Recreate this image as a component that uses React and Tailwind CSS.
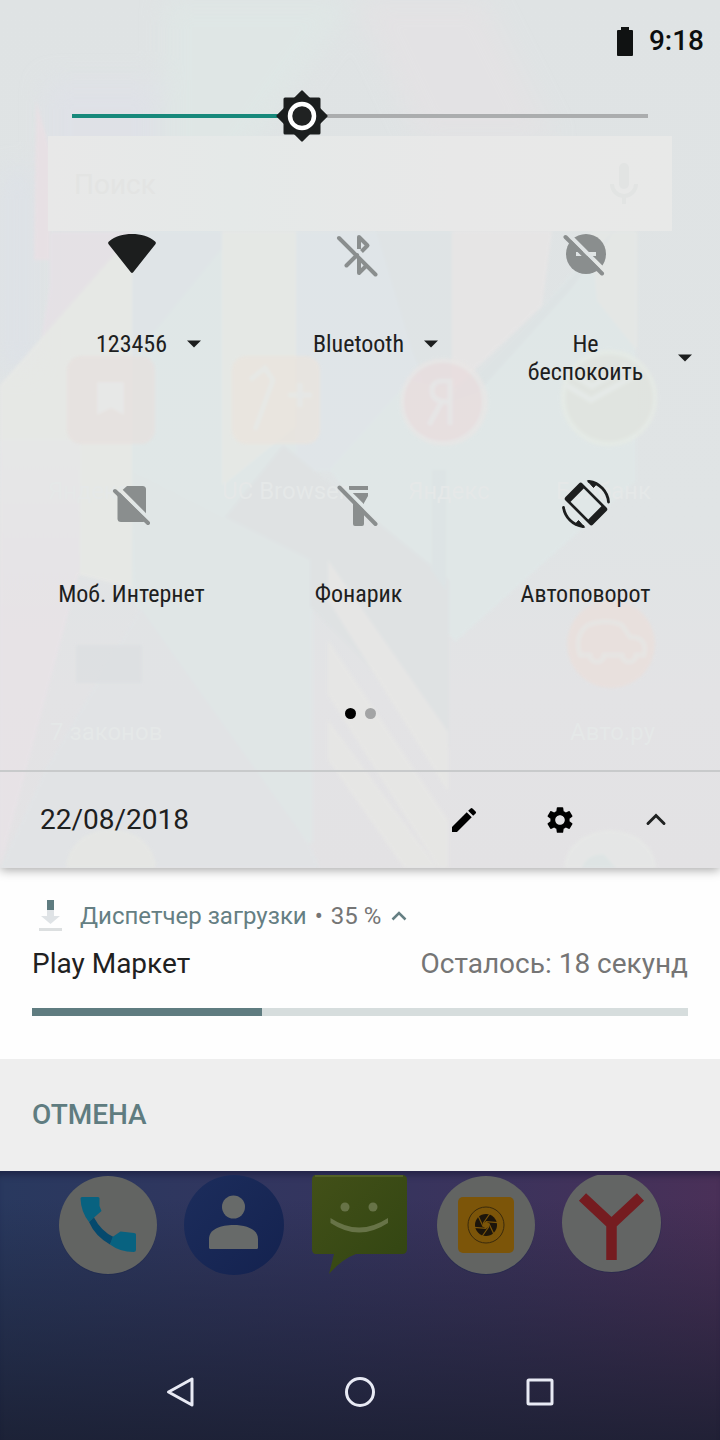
import React, { useState } from "react";
import { MdEdit, MdSettings } from "react-icons/md";

const OFF = "#8a8e8e";
const ON = "#1c1e1e";

function WifiIcon() {
  return (
    <svg viewBox="0 0 56 56" className="size-14" aria-hidden="true">
      <path
        fill={ON}
        d="M4.6 18.2Q3.4 16.6 5.2 15.2C11 10.5 19 8 28 8s17 2.500 22.800 7.200Q52.600 16.600 51.400 18.200L29.200 46.200Q28 47.600 26.800 46.200Z"
      />
    </svg>
  );
}

function BluetoothOffIcon() {
  return (
    <svg viewBox="0 0 56 56" className="size-14" aria-hidden="true">
      <g fill="none" stroke={OFF} strokeWidth="4" strokeLinejoin="round">
        <path d="M28 23V11l8.500 8.500-6 6" />
        <path d="M15.500 39.500l10.500-10.500" strokeLinecap="round" />
        <path d="M28 31v16l7.500-7.500" />
        <path d="M8 12l36.500 36.500" strokeLinecap="round" />
      </g>
    </svg>
  );
}

function DndOffIcon() {
  return (
    <svg viewBox="0 0 56 56" className="size-14" aria-hidden="true">
      <mask id="dnd-cut">
        <rect width="56" height="56" fill="#fff" />
        <path d="M18 28h20" stroke="#000" strokeWidth="4" />
        <path d="M10 8l40 40" stroke="#000" strokeWidth="4" />
      </mask>
      <circle cx="28" cy="28" r="20" fill={OFF} mask="url(#dnd-cut)" />
      <path d="M7.500 11l36.500 36.500" stroke={OFF} strokeWidth="4" strokeLinecap="round" />
    </svg>
  );
}

function SimOffIcon() {
  return (
    <svg viewBox="0 0 56 56" className="size-14" aria-hidden="true">
      <mask id="sim-cut">
        <rect width="56" height="56" fill="#fff" />
        <path d="M12 10l38 38" stroke="#000" strokeWidth="4" />
      </mask>
      <path
        fill={OFF}
        mask="url(#sim-cut)"
        d="M23 10H38.500Q42 10 42 13.500V42.500Q42 46 38.500 46H17Q13.500 46 13.500 42.500V18.500Z"
      />
      <path d="M11 15l33 32" stroke={OFF} strokeWidth="4" strokeLinecap="round" />
    </svg>
  );
}

function FlashlightOffIcon() {
  return (
    <svg viewBox="0 0 56 56" className="size-14" aria-hidden="true">
      <mask id="flash-cut">
        <rect width="56" height="56" fill="#fff" />
        <path d="M11 9l40 40" stroke="#000" strokeWidth="4" />
      </mask>
      <g fill={OFF} mask="url(#flash-cut)">
        <rect x="18" y="10" width="19" height="4" />
        <path d="M18 17h19v3l-4 7v21q0 2-2 2h-7q-2 0-2-2V27l-4-7z" />
      </g>
      <path d="M8.500 11.500l36 36.500" stroke={OFF} strokeWidth="4" strokeLinecap="round" />
    </svg>
  );
}

function RotateIcon() {
  return (
    <svg viewBox="0 0 56 56" className="size-14" aria-hidden="true">
      <path
        fill={ON}
        fillRule="evenodd"
        transform="rotate(-45 28 28)"
        d="M18.500 8.500h19q2.500 0 2.500 2.500v34q0 2.500-2.500 2.500h-19q-2.500 0-2.500-2.500v-34q0-2.500 2.500-2.500zM18.700 15.500v25h18.600v-25z"
      />
      <g fill="none" stroke={ON} strokeWidth="2.800" strokeLinecap="round">
        <path d="M31 5.500A22.500 22.500 0 0 1 50.500 26" />
        <path d="M25 50.500A22.500 22.500 0 0 1 5.500 31.500" />
      </g>
      <path
        fill={ON}
        stroke={ON}
        strokeLinejoin="round"
        d="M29.500 4.700l9.500 2.800-3.500 4z M26.500 51.300l-9.500-2.800 3.500-4z"
      />
    </svg>
  );
}

const tiles = [
  { label: "123456", Icon: WifiIcon, menu: true },
  { label: "Bluetooth", Icon: BluetoothOffIcon, menu: true },
  { label: "Не беспокоить", Icon: DndOffIcon, menu: true },
  { label: "Моб. Интернет", Icon: SimOffIcon },
  { label: "Фонарик", Icon: FlashlightOffIcon },
  { label: "Автоповорот", Icon: RotateIcon },
];

function Tile({ label, Icon, menu }) {
  return (
    <button className="flex h-[250px] flex-col items-center">
      <Icon />
      <span className="mt-12 grid w-full grid-cols-[1fr_auto_1fr] items-center">
        <span
          className={`col-start-2 text-center font-['Roboto_Condensed','Liberation_Sans_Narrow',Roboto,sans-serif] text-2xl leading-7 text-[#1d2020] ${
            menu ? "max-w-36" : ""
          }`}
        >
          {label}
        </span>
        {menu && (
          <svg viewBox="0 0 14 8" className="ml-5 h-2 w-3.5" aria-hidden="true">
            <path d="M0 0.500h14L7 7.500z" fill={ON} />
          </svg>
        )}
      </span>
    </button>
  );
}

// home screen showing through the translucent panel
function Backdrop() {
  return (
    <svg
      viewBox="0 0 720 868"
      preserveAspectRatio="none"
      className="absolute inset-0 h-full w-full"
      aria-hidden="true"
    >
      <defs>
        <linearGradient id="base" x1="0" y1="0" x2="0" y2="1">
          <stop offset="0" stopColor="#dfe3e4" />
          <stop offset="0.600" stopColor="#e0e4e5" />
          <stop offset="0.800" stopColor="#e3e3e5" />
          <stop offset="1" stopColor="#e3e2e4" />
        </linearGradient>
        <linearGradient id="left" x1="0" y1="0" x2="0" y2="1">
          <stop offset="0" stopColor="#e8e8e8" />
          <stop offset="0.400" stopColor="#e8e3e7" />
          <stop offset="1" stopColor="#e8e3e7" />
        </linearGradient>
        <linearGradient id="search" x1="0" y1="0" x2="1" y2="0">
          <stop offset="0" stopColor="#e8e8e8" />
          <stop offset="0.300" stopColor="#e5e9e8" />
          <stop offset="0.650" stopColor="#e8e8e8" />
          <stop offset="1" stopColor="#e8e9e8" />
        </linearGradient>
        <filter id="soft" x="-30%" y="-30%" width="160%" height="160%">
          <feGaussianBlur stdDeviation="12" />
        </filter>
        <filter id="haze" x="-10%" y="-10%" width="120%" height="120%">
          <feGaussianBlur stdDeviation="1.500" />
        </filter>
      </defs>
      <rect width="720" height="868" fill="url(#base)" />
      <g filter="url(#soft)" opacity="0.700">
        <path d="M45 80h115v90H45z" fill="#dfe1e8" />
        <path d="M165 0h190L230 180h-65z" fill="#dfe8e6" />
        <path d="M355 0h130l70 140H420z" fill="#e5e2e4" />
        <path d="M0 170h34v200H0z" fill="#dde1e8" />
      </g>
      <path d="M36 100l14 50v110H34z" fill="#ebe0e4" opacity="0.700" filter="url(#haze)" />
      <g filter="url(#haze)" opacity="0.850">
        <path d="M50 232h90L40 345l10-60z" fill="#e6e1e6" />
        <path d="M0 385v170l160 40V231h-25z" fill="#e8e9e6" />
        <path d="M132 231h90v30l-90 140z" fill="#dfe5e8" />
        <path d="M225 245L132 360v240l180 245V245z" fill="#e0e8e8" />
        <path d="M222 231h74v195l-74 60z" fill="#e7e9e6" />
        <path d="M296 231h80l60 110v130H296z" fill="#e0e6e9" />
        <path d="M376 231h76v220l-40-100z" fill="#dfe4e6" />
        <path d="M452 231h100l-10 75-90 85z" fill="#e8e6e6" />
        <path d="M575 270l60-38v250l-180 160L330 470l80-90 60 10z" fill="#e0e8e8" />
        <path d="M590 231h47v120l-40-50z" fill="#e5e8e6" />
        <path d="M545 305l70-75-45 60-90 100-30 10z" fill="#dde3e4" />
        <path d="M283 445l-58 72 104 110 120 120V580z" fill="#dfe2e3" />
        <path d="M0 440l80 0v130L0 868z" fill="url(#left)" />
        <path d="M145 600L45 770 0 868h320L310 845z" fill="#e1e4e6" />
        <path d="M132 470l178 90v285L135 600z" fill="#e0e7e7" />
        <path d="M432 470h14v120l-14-20z" fill="#dde4e5" />
        <g fill="#e7e7e5">
          <path d="M328 560l120 172v60L328 600z" />
          <path d="M328 640l120 180v48h-10L328 695z" />
          <path d="M328 720l110 148h-34L328 760z" />
        </g>
      </g>
      <rect x="48" y="136" width="624" height="95" fill="url(#search)" />
      <g fontFamily="Roboto, sans-serif">
        <text x="74" y="194" fontSize="28" fill="#e3e4e3">
          Поиск
        </text>
        <g fontSize="24" fill="#e5e8e8">
          <text x="48" y="499">Яндекс</text>
          <text x="222" y="499">UC Browser</text>
          <text x="408" y="499">Яндекс</text>
          <text x="556" y="499">Белбанк</text>
          <text x="50" y="740">7 законов</text>
          <text x="570" y="740">Авто.ру</text>
        </g>
      </g>
      <g fill="none" stroke="#e2e4e3" strokeWidth="4">
        <path d="M612 184a12 12 0 0 0 24 0M624 196v8" />
        <path d="M624 168v16" strokeWidth="10" strokeLinecap="round" />
      </g>
      <g opacity="0.700" filter="url(#haze)">
        <rect x="67" y="356" width="88" height="88" rx="14" fill="#e7e0de" />
        <path d="M97 382h27v33l-13-7-14 7z" fill="#e8e8e8" />
        <rect x="232" y="356" width="88" height="88" rx="14" fill="#ebe4dd" />
        <path
          d="M250 380l15-12 8 12-18 50M288 395h24M300 383v24"
          stroke="#e8e9e6"
          strokeWidth="5"
          fill="none"
        />
        <circle cx="444" cy="402" r="44" fill="#e9e6e5" />
        <circle cx="443" cy="402" r="39" fill="#eadcdd" />
        <path
          d="M450 425v-44h-9q-10 1-9 11t18 10M441 403l-12 22"
          stroke="#e9e6e6"
          strokeWidth="5"
          fill="none"
        />
        <circle cx="609" cy="398" r="46" fill="#e1e4de" stroke="#e6ebe5" strokeWidth="5" />
        <path
          d="M566 385l25 15 50-28M568 372l24 14 35-20"
          stroke="#e8ebe8"
          strokeWidth="5"
          fill="none"
        />
        <path d="M76 645h66v38H76z" fill="#dcdfe1" />
        <circle cx="611" cy="644" r="44" fill="#ebdfda" />
        <path
          d="M580 655q-6-20 8-30 18-7 34 0l8 12q18 0 14 18h-8a7 7 0 0 1-14 0h-18a7 7 0 0 1-14 0z"
          fill="none"
          stroke="#e9e6e3"
          strokeWidth="5"
        />
        <path d="M66 868a44 38 0 0 1 90 0z" fill="#e7e8e4" />
        <path d="M564 868a46 38 0 0 1 92 0z" fill="#e7e9e7" />
        <path d="M582 868q4-14 22-14l12 14z" fill="#dde6e5" />
      </g>
    </svg>
  );
}

function Brightness() {
  const [level, setLevel] = useState(40);

  return (
    <div className="relative mx-[72px] flex h-14 items-center">
      <input
        type="range"
        aria-label="Яркость"
        value={level}
        onChange={(e) => setLevel(e.target.value)}
        className="h-1 w-full appearance-none [&::-webkit-slider-thumb]:size-12 [&::-webkit-slider-thumb]:appearance-none"
        style={{
          background: `linear-gradient(to right, #17897b ${level}%, #abadae ${level}%)`,
        }}
      />
      <svg
        viewBox="0 0 52 52"
        className="pointer-events-none absolute top-1/2 size-[52px] -translate-x-1/2 -translate-y-1/2"
        style={{ left: `${level}%` }}
        aria-hidden="true"
      >
        <g fill="#1c1f1f" stroke="#1c1f1f" strokeWidth="3" strokeLinejoin="round">
          <rect x="9" y="9" width="34" height="34" />
          <rect x="9" y="9" width="34" height="34" transform="rotate(45 26 26)" />
        </g>
        <circle cx="26" cy="26" r="12" fill="#202222" stroke="#fff" strokeWidth="4.500" />
      </svg>
    </div>
  );
}

function QuickSettings() {
  return (
    <section className="relative z-10 shadow-[0_2px_10px_rgba(0,0,0,0.35)]">
      <Backdrop />
      <div className="relative">
        <header className="flex h-[82px] items-center justify-end gap-4 pr-4">
          <svg viewBox="0 0 16 29" className="h-[29px] w-4" aria-label="Батарея">
            <path d="M4 0h8v3h3q1 0 1 1v24q0 1-1 1H1q-1 0-1-1V4q0-1 1-1h3z" fill="#101212" />
          </svg>
          <time className="text-[28px] leading-8 font-medium text-[#0c0e0e]">9:18</time>
        </header>
        <div className="mt-1.5">
          <Brightness />
        </div>
        <div className="mt-[82px] grid grid-cols-3 pr-[21px] pl-[18px]">
          {tiles.map((tile) => (
            <Tile key={tile.label} {...tile} />
          ))}
        </div>
        <div className="-mt-[18px] flex h-3 justify-center gap-[9px]">
          <span className="size-[11px] rounded-full bg-black" />
          <span className="size-[11px] rounded-full bg-[#a3a4a5]" />
        </div>
        <footer className="mt-[50px] flex h-[98px] items-center justify-between border-t-2 border-[#c8cacb] pr-4 pl-10">
          <time className="text-[28px] leading-8 text-[#1d2020]">22/08/2018</time>
          <div className="flex">
            <button aria-label="Изменить" className="flex h-24 w-24 items-center justify-center">
              <MdEdit size={32} />
            </button>
            <button aria-label="Настройки" className="flex h-24 w-24 items-center justify-center">
              <MdSettings size={32} />
            </button>
            <button aria-label="Свернуть" className="flex h-24 w-24 items-center justify-center">
              <svg viewBox="0 0 32 32" className="size-8" aria-hidden="true">
                <path
                  d="M8 19.500l8-8 8 8"
                  fill="none"
                  stroke="#202222"
                  strokeWidth="3"
                  strokeLinecap="round"
                />
              </svg>
            </button>
          </div>
        </footer>
      </div>
    </section>
  );
}

function DownloadNotification() {
  return (
    <article className="bg-[#fefefe]">
      <div className="px-8 pt-8 pb-[43px]">
        <div className="flex h-8 items-center text-2xl leading-8 text-[#757575]">
          <svg viewBox="0 0 40 32" className="mr-2 h-8 w-10" aria-hidden="true">
            <path d="M15 10h7v6h6l-9.500 8L9 16h6z" fill="#dfe3e6" />
            <path d="M15 0h7v10h-7z" fill="#5f7c80" />
            <path d="M7 28h23v3H7z" fill="#dcdfe0" />
          </svg>
          <span className="text-[#657f83]">Диспетчер загрузки</span>
          <span className="mx-2">•</span>
          <span>35 %</span>
          <svg viewBox="0 0 16 16" className="ml-2.5 size-4" aria-hidden="true">
            <path d="M1.500 11.500L8 5l6.500 6.500" fill="none" stroke="#657f83" strokeWidth="2.500" />
          </svg>
        </div>
        <div className="mt-4 flex h-8 items-center justify-between text-[28px] leading-8">
          <h2 className="text-[#1f2121]">Play Маркет</h2>
          <p className="text-[#757575]">Осталось: 18 секунд</p>
        </div>
        <div
          role="progressbar"
          aria-label="Загрузка"
          aria-valuenow={35}
          className="mt-7 h-2 bg-[#d6dddd]"
        >
          <div className="h-full bg-[#5f7c80]" style={{ width: "35%" }} />
        </div>
      </div>
      <div className="flex h-28 items-center bg-[#eeeeee] px-8">
        <button className="text-[28px] leading-8 font-medium text-[#5f7c80]">ОТМЕНА</button>
      </div>
    </article>
  );
}

function PhoneApp() {
  return (
    <svg viewBox="0 0 100 100" className="size-[100px]" aria-hidden="true">
      <circle cx="50" cy="51" r="49" fill="#20294d" opacity="0.500" />
      <circle cx="50" cy="50" r="49" fill="#626462" />
      <path
        d="M22.500 23.500Q22.500 22 24 22H40q1.500 0 1.500 1.500V31L43.500 36 31 47Q23 37 22.500 23.500Z"
        fill="#086280"
      />
      <path d="M36 42.500L31 47Q37 61 52 69.500L55.500 62Q43 56 36 42.500Z" fill="#05496d" />
      <path
        d="M62.500 56.500L54.500 62 52 69.500Q62 77 75.500 77Q78 77 78 75V59.500Q78 58 76 58Z"
        fill="#086280"
      />
    </svg>
  );
}

function ContactsApp() {
  return (
    <svg viewBox="0 0 100 100" className="size-[100px]" aria-hidden="true">
      <defs>
        <linearGradient id="contacts" x1="0" y1="0" x2="1" y2="1">
          <stop offset="0" stopColor="#1c2d5c" />
          <stop offset="1" stopColor="#14224f" />
        </linearGradient>
      </defs>
      <circle cx="50" cy="50" r="50" fill="url(#contacts)" />
      <circle cx="49.500" cy="32" r="11.500" fill="#676a69" />
      <path
        d="M25 72.500V64C25 54 37 50 49.500 50S74 54 74 64v8.500q0 1.500-1.500 1.500h-46q-1.500 0-1.500-1.500z"
        fill="#676a69"
      />
    </svg>
  );
}

function MessagesApp() {
  return (
    <svg viewBox="0 0 100 100" className="size-[100px]" aria-hidden="true">
      <defs>
        <linearGradient id="sms" x1="0" y1="0" x2="1" y2="1">
          <stop offset="0" stopColor="#425018" />
          <stop offset="1" stopColor="#324512" />
        </linearGradient>
      </defs>
      <path
        d="M6 0h86q5 0 5 5v69q0 5-5 5H46Q32 84 19 99l5-20H6q-4 0-4-5V5q0-5 4-5z"
        fill="url(#sms)"
      />
      <path d="M5 1h88" stroke="#59672b" strokeWidth="1.500" />
      <circle cx="35" cy="32" r="4.500" fill="#677347" />
      <circle cx="63" cy="32" r="4.500" fill="#677347" />
      <path d="M20.500 43Q49 62 78 43V48Q49 67 20.500 48Z" fill="#677347" />
    </svg>
  );
}

const blades = [0, 60, 120, 180, 240, 300];

function CameraApp() {
  return (
    <svg viewBox="0 0 100 100" className="size-[100px]" aria-hidden="true">
      <circle cx="50" cy="51" r="49" fill="#20294d" opacity="0.500" />
      <circle cx="50" cy="50" r="49" fill="#626462" />
      <rect x="22" y="22" width="56" height="56" rx="5" fill="#7c5509" />
      <circle cx="50" cy="50" r="18" fill="none" stroke="#3a2a0c" strokeWidth="1" />
      <circle cx="50" cy="50" r="11" fill="#1c150b" />
      <path d="M50 46.500l3 1.800v3.400L50 53.500l-3-1.800v-3.400z" fill="#7c5509" />
      {blades.map((angle) => (
        <path
          key={angle}
          d="M47 48.500L54 38.500"
          stroke="#7c5509"
          strokeWidth="1.200"
          transform={`rotate(${angle} 50 50)`}
        />
      ))}
    </svg>
  );
}

function YandexApp() {
  return (
    <svg viewBox="0 0 100 100" className="size-[100px]" aria-hidden="true">
      <circle cx="50" cy="48.500" r="49.500" fill="#20294d" opacity="0.500" />
      <circle cx="49.500" cy="47.500" r="49.500" fill="#636564" />
      <path
        d="M20.500 22L49.500 49 78.500 22M49.500 47V85"
        fill="none"
        stroke="#751c20"
        strokeWidth="10.500"
      />
    </svg>
  );
}

const dock = [
  { name: "Телефон", Icon: PhoneApp },
  { name: "Контакты", Icon: ContactsApp },
  { name: "Сообщения", Icon: MessagesApp },
  { name: "Камера", Icon: CameraApp },
  { name: "Яндекс", Icon: YandexApp },
];

function HomeScreen() {
  return (
    <main className="flex flex-1 flex-col justify-between bg-[linear-gradient(to_bottom,rgba(26,32,50,0)_10%,rgba(26,30,48,0.85)_100%),linear-gradient(to_right,#29395f_0%,#34355f_45%,#3c335c_70%,#4a3058_100%)] shadow-[inset_0_8px_6px_-4px_rgba(20,20,50,0.5)]">
      <div className="flex px-[45px] pt-1">
        {dock.map(({ name, Icon }) => (
          <button key={name} aria-label={name} className="flex flex-1 justify-center">
            <Icon />
          </button>
        ))}
      </div>
      <nav className="flex h-24 px-[90px]">
        <button aria-label="Назад" className="flex flex-1 items-center justify-center">
          <svg viewBox="0 0 32 32" className="size-8" aria-hidden="true">
            <path
              d="M28 3v26L4.500 16z"
              fill="none"
              stroke="#e8eaf4"
              strokeWidth="3"
              strokeLinejoin="round"
            />
          </svg>
        </button>
        <button aria-label="Домой" className="flex flex-1 items-center justify-center">
          <svg viewBox="0 0 32 32" className="size-8" aria-hidden="true">
            <circle cx="16" cy="16" r="13.500" fill="none" stroke="#e8eaf4" strokeWidth="3" />
          </svg>
        </button>
        <button aria-label="Недавние" className="flex flex-1 items-center justify-center">
          <svg viewBox="0 0 32 32" className="size-8" aria-hidden="true">
            <rect
              x="4"
              y="4"
              width="24"
              height="24"
              rx="1"
              fill="none"
              stroke="#e8eaf4"
              strokeWidth="3"
            />
          </svg>
        </button>
      </nav>
    </main>
  );
}

export default function App() {
  return (
    <div className="flex min-h-screen flex-col font-[Roboto,sans-serif]">
      <QuickSettings />
      <DownloadNotification />
      <HomeScreen />
    </div>
  );
}
